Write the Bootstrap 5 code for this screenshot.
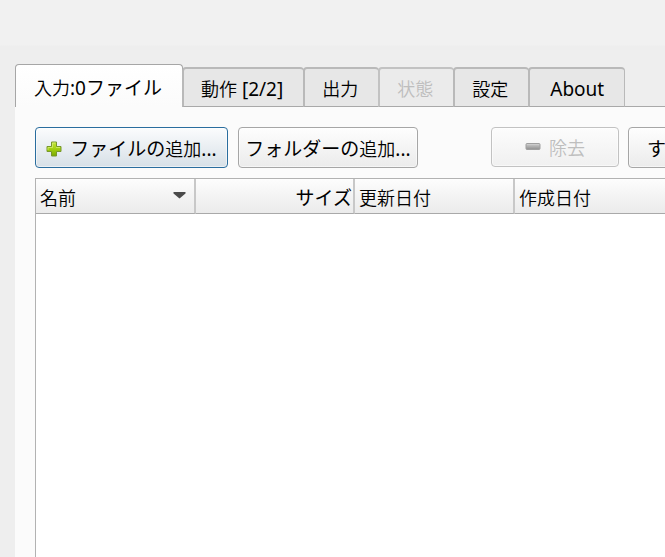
<!DOCTYPE html>
<html lang="ja">
<head>
<meta charset="utf-8">
<meta name="viewport" content="width=device-width, initial-scale=1">
<title>ファイル</title>
<link href="https://cdn.jsdelivr.net/npm/bootstrap@5.3.0/dist/css/bootstrap.min.css" rel="stylesheet">
<style>
body { background: linear-gradient(#f1f1f1 45px, #eeeeee 46px); color: #000; font-family: "Noto Sans", "Noto Sans CJK JP", sans-serif; font-size: 18px; font-weight: 350; line-height: 24px; }
.kana, .latin { font-size: 19px; font-weight: 400; }
.window { padding: 64px 0 0 15px; }
.tabs { border: 0; position: relative; z-index: 1; }
.tabs .nav-item { flex: none; }
.tabs .nav-link { margin: 0 0 0 -1px; height: 40px; padding: 2px 20px 0 17px; border: 1px solid #b9b9b9; border-width: 2px 1px 1px 2px; border-bottom-color: #a9a9a9; border-radius: 4px 4px 0 0; background: #e7e7e7; color: #000; font-weight: 350; line-height: 24px; white-space: nowrap; }
.tabs .nav-link.active { margin: 0; height: 43px; padding: 6px 20px 2px 18px; border: 1px solid #a6a6a6; border-bottom: 0; background: linear-gradient(#fff, #fbfbfb); color: #000; }
.tabs .nav-link:disabled { color: #bebebe; background: #ebebeb; border-color: #c2c2c2; border-bottom-color: #a9a9a9; }
.panel { margin-top: -1px; padding: 20px 0 0 20px; border-top: 1px solid #a9a9a9; background: #fbfbfb; }
.tools { gap: 10px; }
.tool { height: 41px; padding: 2px 6px 0; border: 1px solid #a6a6a6; border-radius: 4px; background: linear-gradient(#fefefe, #ebebeb); box-shadow: inset 0 0 0 1px #ffffff80; color: #000; font-size: 18px; font-weight: 350; line-height: 24px; white-space: nowrap; flex: none; }
.tool:disabled { width: 128px; height: 40px; opacity: 1; color: #bebebe; border-color: #c2c2c2; background: linear-gradient(#fcfcfc, #f0f0f0); }
.tool.focused { width: 193px; border-color: #2a6d9e; background: linear-gradient(#fbfcfd, #d7e0e7); }
.tool.folder { width: 180px; }
.tool.clear { padding: 2px 18px 0; }
.tool.remove { margin-left: 63px; margin-right: -1px; }
.frame { border: 1px solid #b2b2b2; border-right: 0; background: #fff; min-height: calc(100vh - 160px); margin-top: 10px; }
.files { width: 800px; table-layout: fixed; border-collapse: separate; border-spacing: 0; }
.files th { height: 35px; padding: 4px 4px 0; border: solid #a9a9a9; border-width: 0 2px 1px 0; border-right-color: #c8c8c8; background: linear-gradient(#fdfdfd, #ebebeb); font-weight: 350; line-height: 28px; white-space: nowrap; }
.files th.size { padding: 4px 1px 0 4px; }
</style>
<script src="https://cdn.jsdelivr.net/npm/bootstrap@5.3.0/dist/js/bootstrap.bundle.min.js"></script>
</head>
<body class="overflow-hidden">
<main class="window min-vh-100 overflow-hidden">
  <ul class="nav nav-tabs tabs flex-nowrap align-items-end" role="tablist">
    <li class="nav-item"><button class="nav-link active" type="button" role="tab" aria-selected="true">入力<span class="latin">:0</span><span class="kana">ファイル</span></button></li>
    <li class="nav-item"><button class="nav-link" type="button" role="tab">動作<span class="latin"> [2/2]</span></button></li>
    <li class="nav-item"><button class="nav-link" type="button" role="tab">出力</button></li>
    <li class="nav-item"><button class="nav-link" type="button" role="tab" disabled>状態</button></li>
    <li class="nav-item"><button class="nav-link" type="button" role="tab">設定</button></li>
    <li class="nav-item"><button class="nav-link px-3" type="button" role="tab"><span class="latin mx-1">About</span></button></li>
  </ul>
  <section class="panel">
    <div class="tools d-flex align-items-start">
      <button class="btn tool focused d-flex align-items-center justify-content-center gap-2" type="button">
        <svg width="16" height="16" viewBox="0 0 16 16" aria-hidden="true"><defs><linearGradient id="g" x2="0" y2="1"><stop stop-color="#c4e63c"/><stop offset=".5" stop-color="#a2d010"/><stop offset="1" stop-color="#79a900"/></linearGradient></defs><path d="M5.500 1h5v4.500h4.500v5h-4.500v4.500h-5v-4.500h-4.500v-5h4.500z" fill="url(#g)" stroke="#77972c" stroke-linejoin="round"/><path d="M6.500 6.500v-4.500h3M2 9V6.500h4.500M10 6.500h4" fill="none" stroke="#e0f48a" stroke-opacity=".6"/></svg>
        <span><span class="kana">ファイルの</span>追加<span class="latin">...</span></span>
      </button>
      <button class="btn tool folder" type="button"><span class="kana">フォルダーの</span>追加<span class="latin">...</span></button>
      <button class="btn tool remove d-flex align-items-center justify-content-center gap-2" type="button" disabled>
        <svg width="16" height="16" viewBox="0 0 16 16" aria-hidden="true"><defs><linearGradient id="m" x2="0" y2="1"><stop stop-color="#d0d0d0"/><stop offset="1" stop-color="#8f8f8f"/></linearGradient></defs><rect x="1" y="3.500" width="14" height="6" rx="1" fill="url(#m)" stroke="#a0a0a0"/><path d="M2 4.500h12" stroke="#ccc"/></svg>
        <span>除去</span>
      </button>
      <button class="btn tool clear" type="button"><span class="kana">すべて</span>除去</button>
    </div>
    <div class="frame overflow-hidden">
      <table class="files">
        <colgroup><col width="160"><col width="159"><col width="160"><col width="160"><col></colgroup>
        <thead><tr>
          <th scope="col"><span class="d-flex justify-content-between"><span>名前</span><svg class="me-1 mt-2" width="13" height="7" viewBox="0 0 13 7" aria-hidden="true"><path d="M.5 0h12v1.500L6.500 6.500.5 1.500z" fill="#4b4b4b"/></svg></span></th>
          <th scope="col" class="size text-end"><span class="kana">サイズ</span></th>
          <th scope="col">更新日付</th>
          <th scope="col">作成日付</th>
          <th scope="col"></th>
        </tr></thead>
      </table>
    </div>
  </section>
</main>
</body>
</html>
